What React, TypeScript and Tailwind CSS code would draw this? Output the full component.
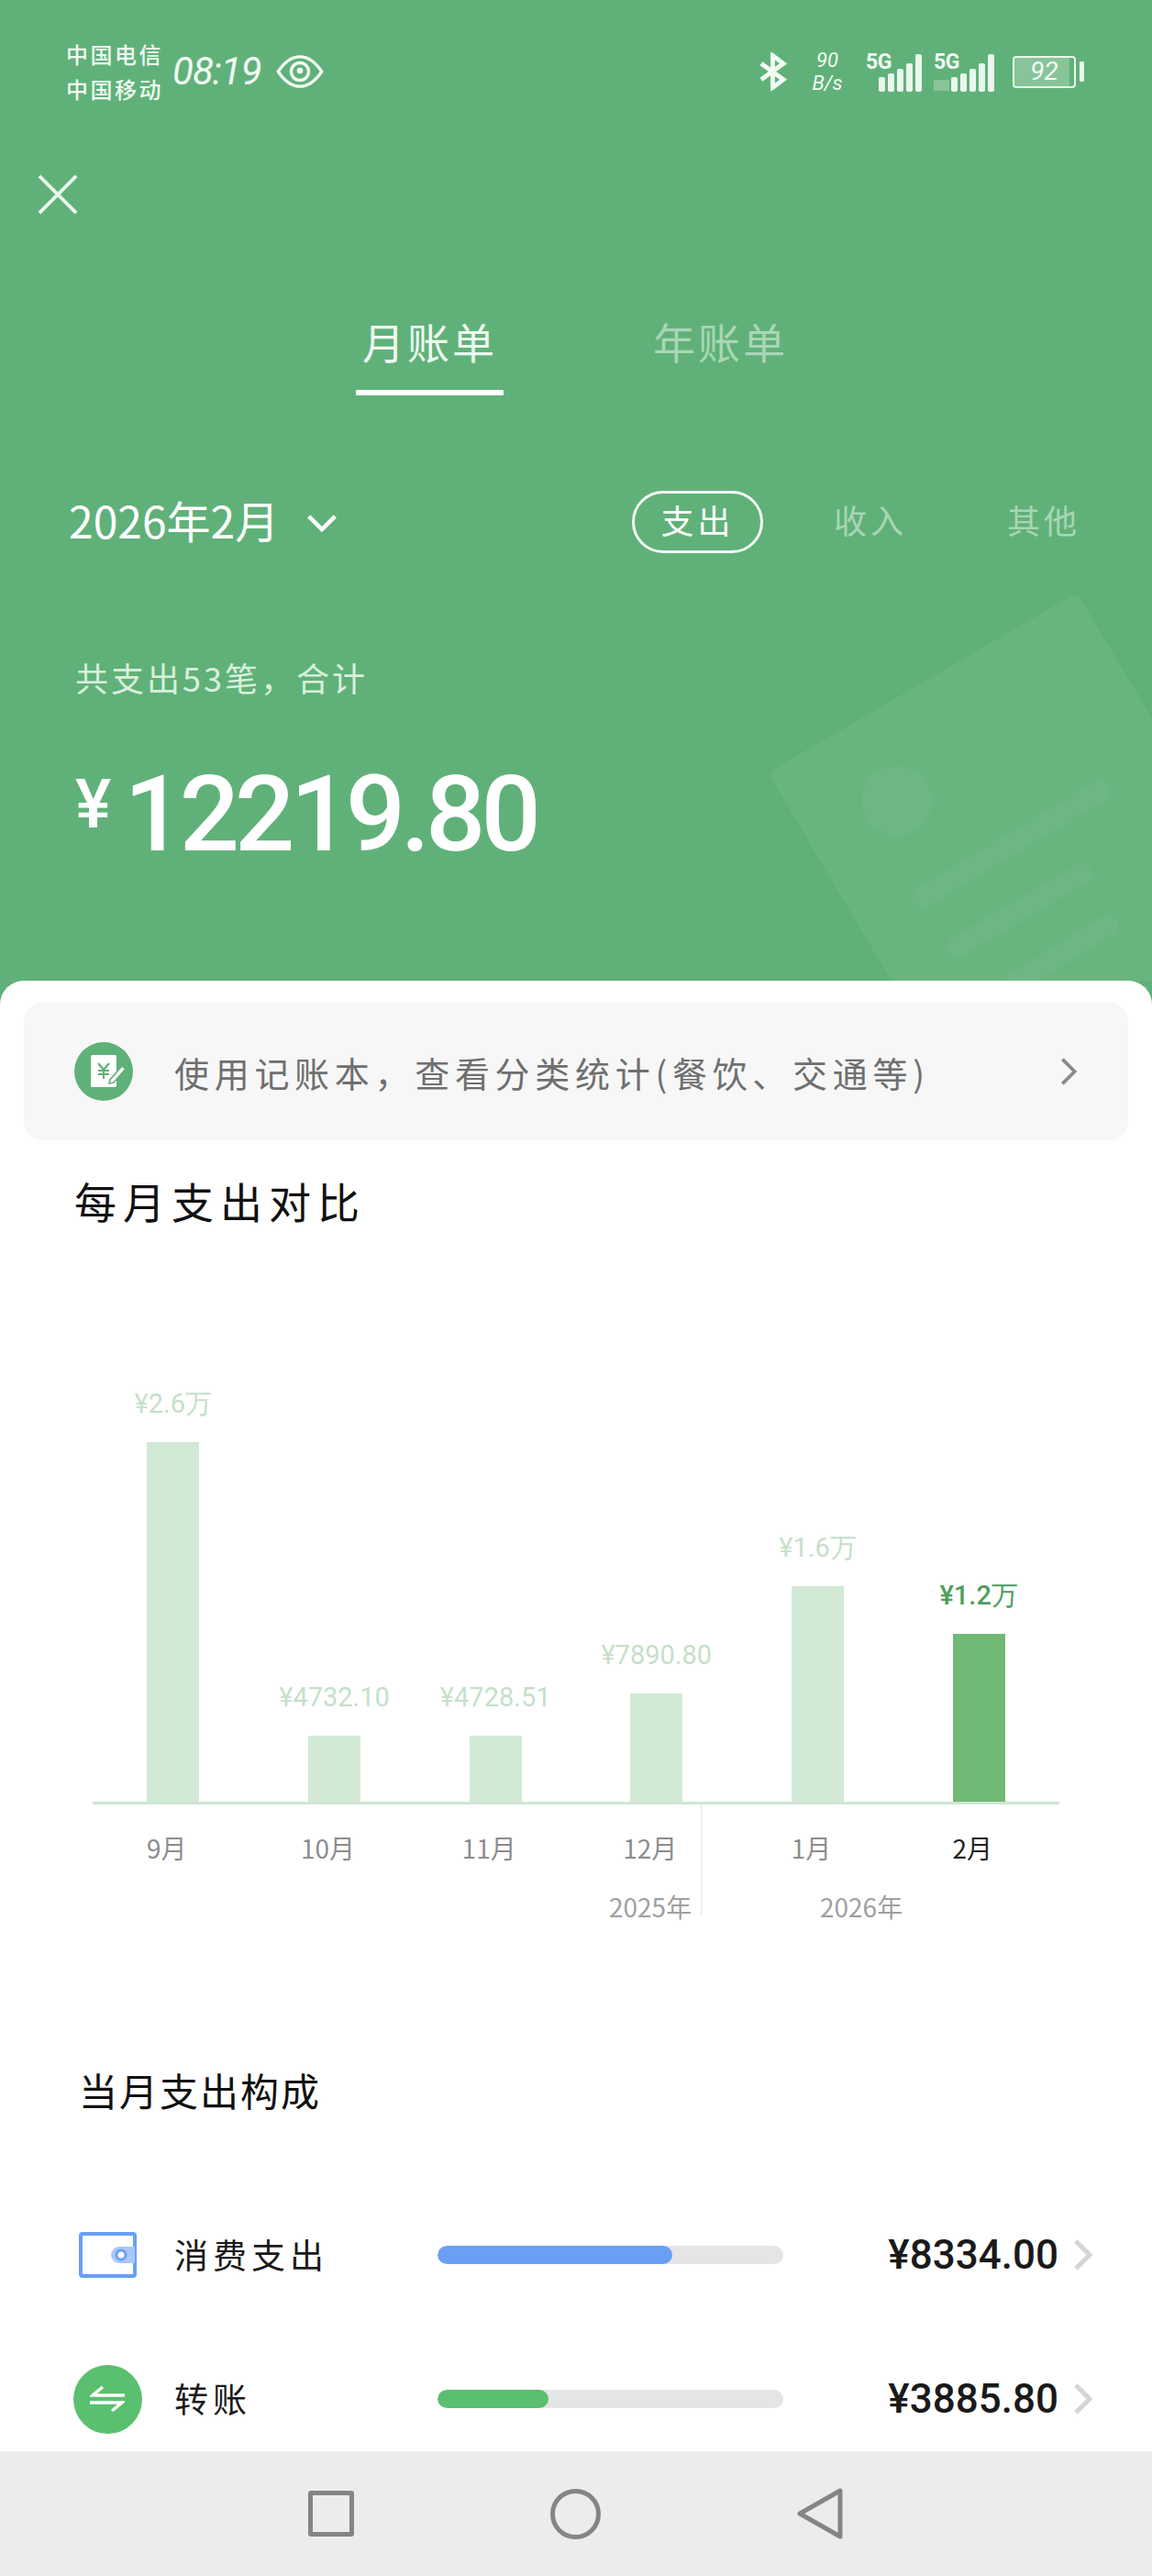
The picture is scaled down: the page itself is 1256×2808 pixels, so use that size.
import React from "react";

const hand = "font-['Noto_Sans_CJK_SC','Noto_Sans',sans-serif]";
const num = "font-['Roboto','Liberation_Sans',sans-serif]";

const bars = [
  { m: "9月", v: "¥2.6万", h: 392 },
  { m: "10月", v: "¥4732.10", h: 72 },
  { m: "11月", v: "¥4728.51", h: 72 },
  { m: "12月", v: "¥7890.80", h: 118 },
  { m: "1月", v: "¥1.6万", h: 235 },
  { m: "2月", v: "¥1.2万", h: 183, active: true },
];

function Signal({ dim }: { dim?: boolean }) {
  return (
    <div className={`relative h-[44px] flex items-end justify-end gap-[3px] ${dim ? "w-[66px] ml-[13px]" : "w-[61px] ml-[25px]"}`}>
      <span className={`${num} absolute left-0 top-0 text-[23px] leading-[24px] font-bold tracking-[-0.5px]`}>5G</span>
      {dim && <span className="absolute left-0 bottom-[1px] w-[17px] h-[12px] bg-white/25" />}
      {[16, 20, 25, 31, 41].map((h, i) => (
        <span key={i} className="w-[7px] rounded-[2px] bg-[#eaf7ec]" style={{ height: h }} />
      ))}
    </div>
  );
}

function StatusBar() {
  return (
    <div className="h-[130px] pl-[72px] pr-[74px] pt-[40px] flex justify-between items-start text-[#f1fbf3]">
      <div className="flex items-center h-[76px]">
        <div className={`${hand} text-[24px] leading-[38px] font-medium tracking-[2.5px] w-[112px] whitespace-nowrap`}>
          <div>中国电信</div>
          <div>中国移动</div>
        </div>
        <div className={`${num} text-[42px] leading-[44px] ml-[4px] italic w-[112px] tracking-[-1px]`}>08:19</div>
        <svg width="54" height="38" viewBox="0 0 54 40" fill="none" stroke="currentColor">
          <path d="M2 20C10 8 18 3 27 3s17 5 25 17c-8 12-16 17-25 17S10 32 2 20Z" strokeWidth="3.5" />
          <circle cx="27" cy="20" r="10" strokeWidth="3.5" />
          <circle cx="27" cy="19" r="3.5" fill="currentColor" stroke="none" />
        </svg>
      </div>
      <div className="flex items-center h-[76px]">
        <svg width="31" height="42" viewBox="0 0 32 42" fill="none" stroke="currentColor" strokeWidth="5">
          <path d="M3 12 28 30 16 39V3l12 9L3 30" />
        </svg>
        <div className={`${num} ml-[27px] text-[22px] leading-[25px] text-center italic w-[34px]`}>
          <div>90</div>
          <div>B/s</div>
        </div>
        <Signal />
        <Signal dim />
        <div className="flex items-center ml-[20px]">
          <div className="relative w-[69px] h-[35px] rounded-[4px] border-2 border-[#eaf7ec] flex items-center justify-center overflow-hidden">
            <div className="absolute left-0 top-0 bottom-0 w-[60px] bg-white/25" />
            <span className={`${num} relative text-[28px] italic`}>92</span>
          </div>
          <div className="ml-[4px] w-[5px] h-[22px] rounded-[1px] bg-[#eaf7ec]" />
        </div>
      </div>
    </div>
  );
}

function Watermark() {
  return (
    <svg className="absolute left-[800px] top-[640px]" width="456" height="429" viewBox="0 0 456 429" fill="none">
      <path d="M50 195 364 12q10-6 16 4l76 127v286H172L42 210q-4-10 8-15Z" fill="#fff" fillOpacity="0.06" />
      <circle cx="178" cy="233" r="38" fill="#fff" fillOpacity="0.04" />
      <path d="M206 338 400 222M244 392 380 312M300 436 408 368" stroke="#fff" strokeOpacity="0.04" strokeWidth="22" strokeLinecap="round" />
    </svg>
  );
}

function Bar({ b }: { b: (typeof bars)[number] }) {
  return (
    <div className="flex flex-col items-center justify-end">
      <div className={`${num} text-[29px] leading-[36px] mb-[24px] whitespace-nowrap ${b.active ? "text-[#4f9e5f] font-medium" : "text-[#c6dfca]"}`}>{b.v}</div>
      <div className={`w-[57px] ${b.active ? "bg-[#6fb975]" : "bg-[#d2e9d6]"}`} style={{ height: b.h }} />
    </div>
  );
}

function Row({ icon, name, pct, color, amount }: { icon: React.ReactNode; name: string; pct: number; color: string; amount: string }) {
  return (
    <div className="flex items-center h-[76px]">
      <div className="w-[76px] h-[76px] flex items-center justify-center shrink-0">{icon}</div>
      <div className={`${hand} w-[322px] shrink-0 pl-[35px] text-[37px] text-[#1a1a1a] tracking-[5px]`}>{name}</div>
      <div className="w-[377px] h-[20px] rounded-full bg-[#e5e5e5] overflow-hidden shrink-0">
        <div className="h-full rounded-full" style={{ width: `${pct}%`, background: color }} />
      </div>
      <div className={`${num} flex-1 text-right text-[44px] font-medium text-[#1a1a1a]`}>{amount}</div>
      <svg width="24" height="36" viewBox="0 0 24 34" fill="none" stroke="#d4d4d4" strokeWidth="5" className="ml-[15px] shrink-0">
        <path d="M4 2l15 15L4 32" />
      </svg>
    </div>
  );
}

export default function App() {
  return (
    <div className="relative w-[1256px] h-[2808px] overflow-hidden bg-[#60b179] flex flex-col">
      <Watermark />
      <StatusBar />

      <svg width="44" height="44" viewBox="0 0 46 46" className="ml-[41px] mt-[60px] shrink-0" fill="none" stroke="#eaf7ec" strokeWidth="4">
        <path d="M2 2l42 42M44 2 2 44" />
      </svg>

      <div className="mt-[105px] flex items-start pl-[388px] shrink-0">
        <div className="w-[161px] flex flex-col items-center">
          <div className={`${hand} text-[46px] leading-[64px] text-[#eef9f0] tracking-[3px] whitespace-nowrap`}>月账单</div>
          <div className="w-[161px] h-[6px] bg-white mt-[22px]" />
        </div>
        <div className={`${hand} ml-[163px] text-[46px] leading-[64px] text-[#a8d6b6] tracking-[3px] whitespace-nowrap`}>年账单</div>
      </div>

      <div className="mt-[104px] flex items-center justify-between pl-[75px] pr-[78px] h-[68px] shrink-0">
        <div className={`${hand} flex items-center text-[48px] leading-[60px] text-white -mt-[6px]`}>
          2026年2月
          <svg width="34" height="22" viewBox="0 0 38 24" fill="none" stroke="#fff" strokeWidth="5" className="ml-[30px] mt-[8px]">
            <path d="M3 4l16 16L35 4" />
          </svg>
        </div>
        <div className={`${hand} flex items-center text-[36px] tracking-[4px]`}>
          <div className="w-[143px] h-[68px] rounded-full border-[3px] border-[#f5fbf6] text-white flex items-center justify-center pb-[6px]">支出</div>
          <div className="ml-[77px] pb-[6px] text-[#a8d6b6]">收入</div>
          <div className="ml-[109px] pb-[6px] text-[#a8d6b6]">其他</div>
        </div>
      </div>

      <div className={`${hand} ml-[82px] mt-[110px] text-[36px] leading-[50px] text-[#d8f0dc] tracking-[3px] shrink-0`}>共支出53笔，合计</div>

      <div className={`${num} ml-[82px] mt-[70px] flex items-start text-white font-medium h-[110px] shrink-0`}>
        <span className="text-[74px] leading-[80px] mt-[4px] mr-[14px]">¥</span>
        <span className="text-[115px] leading-[110px] tracking-[-5px]">12219.80</span>
      </div>

      <div className="relative mt-[126px] flex-1 bg-white rounded-t-[26px] px-[26px] pt-[24px]">
        <div className="h-[150px] rounded-[20px] bg-[#f7f7f7] flex items-center pl-[55px] pr-[55px]">
          <svg width="64" height="64" viewBox="0 0 64 64" fill="none" className="shrink-0">
            <circle cx="32" cy="32" r="32" fill="#60b179" />
            <rect x="18" y="14" width="28" height="35" rx="1.5" fill="#fff" />
            <path d="M26 23l6 7 6-7M32 30v10M26 31h12M26 35h12" stroke="#60b179" strokeWidth="2.2" />
            <path d="M38 45l5-1 13-15-4-3-13 15Z" fill="#fff" stroke="#60b179" strokeWidth="1.6" />
          </svg>
          <div className={`${hand} ml-[45px] flex-1 text-[38px] text-[#6f6f6f] tracking-[5.7px] whitespace-nowrap`}>使用记账本，查看分类统计(餐饮、交通等)</div>
          <svg width="20" height="34" viewBox="0 0 24 38" fill="none" stroke="#8a8a8a" strokeWidth="4.5" className="shrink-0">
            <path d="M4 3l16 16L4 35" />
          </svg>
        </div>

        <div className={`${hand} ml-[55px] mt-[32px] text-[46px] leading-[66px] text-[#111] tracking-[7px]`}>每月支出对比</div>

        <div className="mt-[161px] ml-[75px] w-[1054px] h-[465px] grid grid-cols-6 border-b-[3px] border-[#cfe6d3] items-end">
          {bars.map((b) => (
            <Bar key={b.m} b={b} />
          ))}
        </div>

        <div className="relative ml-[75px] w-[1054px] pt-[27px] h-[130px]">
          <div className="grid grid-cols-6">
            {bars.map((b) => (
              <div key={b.m} className={`${hand} pr-[14px] text-center text-[28px] leading-[40px] ${b.active ? "text-[#222]" : "text-[#8c8c8c]"}`}>{b.m}</div>
            ))}
          </div>
          <div className={`${hand} mt-[26px] pl-[563px] flex text-[28px] leading-[36px] text-[#a0a0a0]`}>
            <div className="w-[100px]">2025年</div>
            <div className="ml-[130px]">2026年</div>
          </div>
          <div className="absolute left-[663px] top-0 h-[121px] w-px bg-[#e2e2e2]" />
        </div>

        <div className={`${hand} ml-[60px] mt-[151px] text-[42px] leading-[60px] text-[#111] tracking-[2px]`}>当月支出构成</div>

        <div className="ml-[53px] mr-[37px] mt-[112px] flex flex-col gap-[81px]">
          <Row
            name="消费支出"
            pct={68}
            color="#6a9ff5"
            amount="¥8334.00"
            icon={
              <svg width="63" height="50" viewBox="0 0 63 50" fill="none">
                <rect x="2" y="2" width="59" height="46" rx="2" stroke="#6a9ff5" strokeWidth="4" />
                <path d="M61 16H44a9 9 0 0 0 0 18h17Z" fill="#a9c7f8" />
                <circle cx="46" cy="25" r="5" stroke="#6a9ff5" strokeWidth="3" fill="#fff" />
              </svg>
            }
          />
          <Row
            name="转账"
            pct={32}
            color="#5abf6f"
            amount="¥3885.80"
            icon={
              <div className="w-[75px] h-[75px] rounded-full bg-[#5abf6f] flex items-center justify-center">
                <svg width="38" height="30" viewBox="0 0 38 30" fill="none" stroke="#fff" strokeWidth="3.5">
                  <path d="M38 11H3L14 2M0 19h35L24 28" />
                </svg>
              </div>
            }
          />
        </div>
      </div>

      <div className="absolute left-0 right-0 bottom-0 h-[136px] bg-[#ececec] flex items-center pl-[336px]">
        <div className="w-[50px] h-[50px] rounded-[3px] border-[5px] border-[#858585]" />
        <div className="ml-[214px] w-[55px] h-[55px] rounded-full border-[5px] border-[#858585]" />
        <svg width="50" height="56" viewBox="0 0 50 56" fill="none" stroke="#858585" strokeWidth="5" strokeLinejoin="round" className="ml-[214px]">
          <path d="M47 3v50L3 28Z" />
        </svg>
      </div>
    </div>
  );
}
